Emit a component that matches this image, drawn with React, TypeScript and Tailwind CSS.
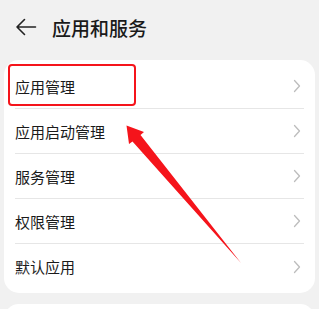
import React from "react";

const items = ["应用管理", "应用启动管理", "服务管理", "权限管理", "默认应用"];

function Chevron() {
  return (
    <svg width="8" height="14" viewBox="0 0 8 14" fill="none">
      <path d="M1.5 1.5 L6.5 7 L1.5 12.5" stroke="#bdbdbd" strokeWidth="1.3" strokeLinecap="round" strokeLinejoin="round" />
    </svg>
  );
}

export default function App() {
  return (
    <div
      className="relative w-[319px] h-[309px] overflow-hidden bg-[#f1f1f1] text-[#1a1a1a]"
      style={{ fontFamily: '"Noto Sans CJK SC", "Noto Sans", sans-serif' }}
    >
      <div className="flex h-[54px] items-center pl-[15px]">
        <svg width="22" height="18" viewBox="0 0 22 18" fill="none">
          <path d="M20.5 9 H2 M9.5 1.5 L2 9 L9.5 16.5" stroke="#222" strokeWidth="1.6" strokeLinecap="round" strokeLinejoin="round" />
        </svg>
        <span className="ml-[15px] text-[19px] leading-none font-medium">应用和服务</span>
      </div>
      <div className="mx-[4px] mt-[6px] rounded-[15px] bg-white px-[11px] py-[4px]">
        {items.map((t, i) => (
          <div
            key={t}
            className={`flex h-[45px] items-center justify-between ${i < items.length - 1 ? "border-b border-[#e6e6e6]" : ""}`}
          >
            <span className="text-[15px] leading-none">{t}</span>
            <span className="mr-[3px] flex items-center"><Chevron /></span>
          </div>
        ))}
      </div>
      <div className="mx-[4px] mt-[11px] h-[40px] rounded-[15px] bg-white" />

      <div className="absolute left-[8px] top-[64px] h-[42px] w-[128px] rounded-[4px] border-2 border-[#f5141b]" />
      <svg className="absolute left-0 top-0" width="319" height="309" viewBox="0 0 319 309">
        <polygon
          points="126.5,125.5 144,132 140.5,135 241,263 132.5,141.5 129,144"
          fill="#f5141b"
        />
      </svg>
    </div>
  );
}
